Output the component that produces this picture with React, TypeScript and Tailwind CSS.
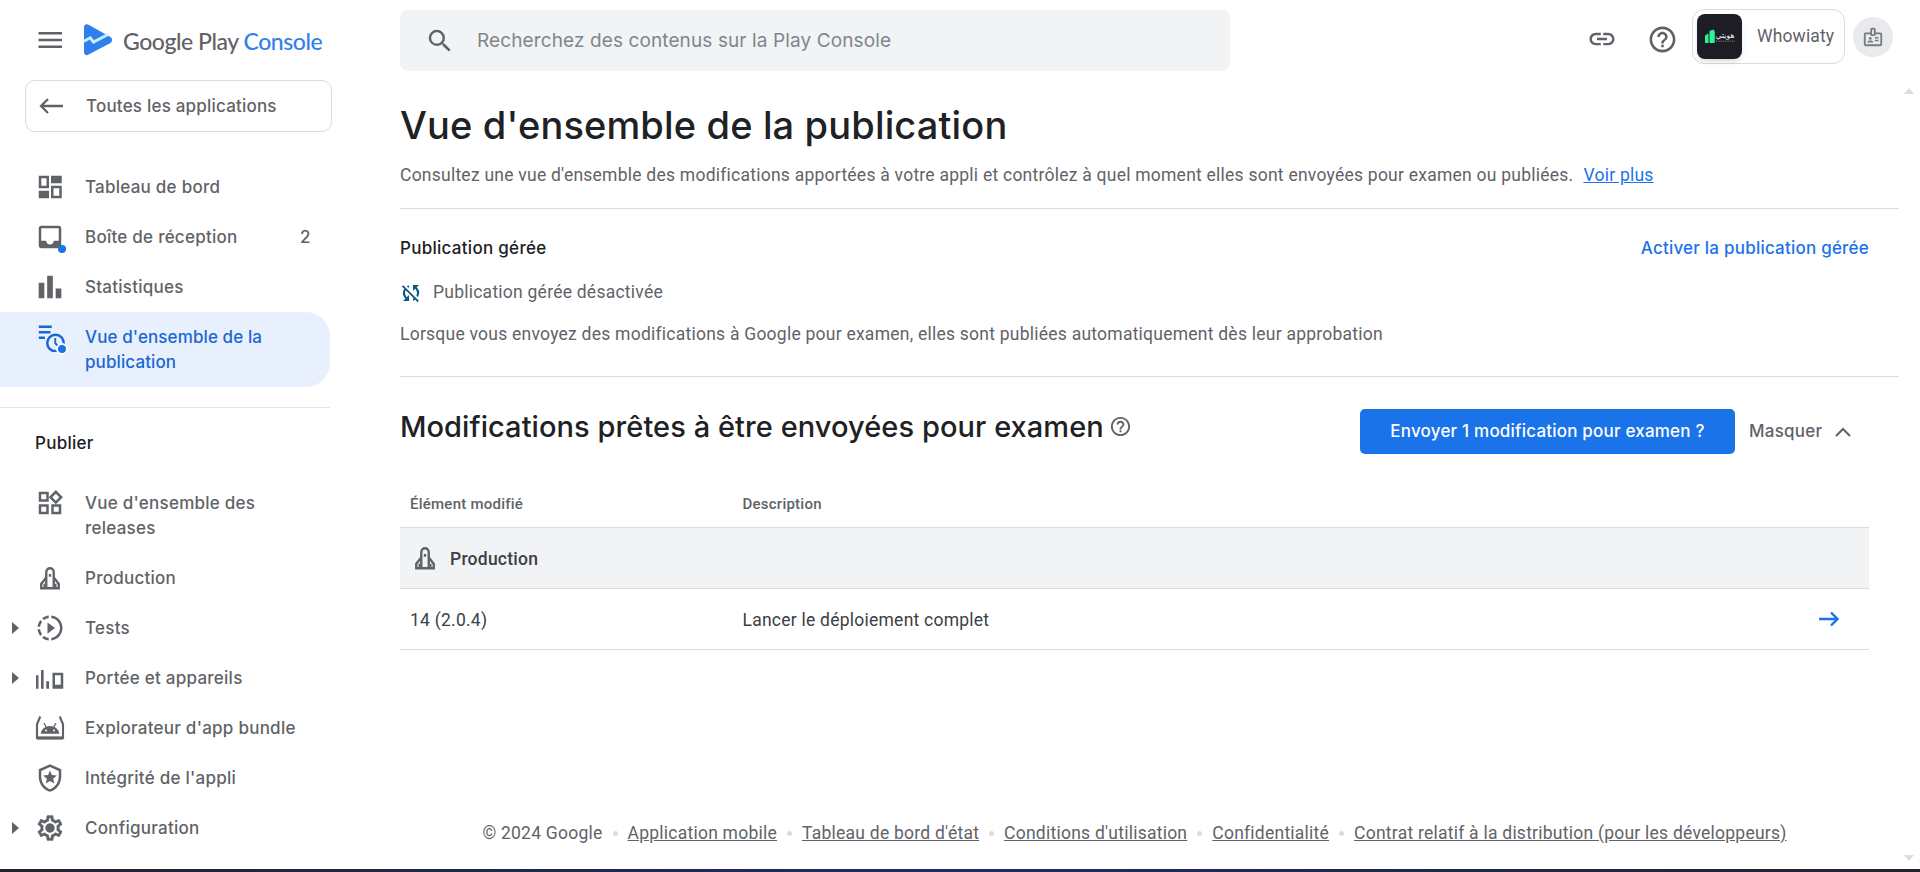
import type { ReactNode } from 'react';
import {
  MdBarChart,
  MdHelpOutline,
  MdInbox,
  MdLink,
  MdOutlineBadge,
  MdOutlineLocalPolice,
  MdOutlineWidgets,
  MdSearch,
  MdSlowMotionVideo,
  MdSyncDisabled,
} from 'react-icons/md';

const ICON = 'size-[30px]';

function DashboardIcon() {
  return (
    <svg viewBox="0 0 24 24" className={ICON} fill="currentColor">
      <path fillRule="evenodd" d="M3 3h8.200v10H3zM5 5v6h4.200V5zM12.800 11h8.600v10h-8.600zM14.800 13v6h4.600v-6z" />
      <path d="M12.800 3h8.600v6h-8.600zM3 15h8.200v6H3z" />
    </svg>
  );
}

function OverviewIcon() {
  return (
    <svg viewBox="0 0 24 24" className={ICON} fill="none" stroke="currentColor" strokeWidth="2">
      <path d="M3 3.800h10.400M3 8.200h9.400M3 12.600h5" />
      <circle cx="16.400" cy="16.800" r="6.600" />
      <path d="M16.200 12.800v4.200l2 2" strokeWidth="1.500" />
    </svg>
  );
}

function RocketIcon() {
  return (
    <svg viewBox="0 0 24 24" className={ICON} fill="none" stroke="currentColor" strokeWidth="1.900">
      <path d="M9 20.300V7.400C9 5.400 10.400 4.200 12 4.200s3 1.200 3 3.200v12.900" />
      <path d="M9 11.500l-4 5.300v3.400h14v-3.400l-4-5.300" />
      <path d="M12 8.800v2.200" />
      <path d="M7.400 16.500v3.500M16.600 16.500v3.500" strokeWidth="1.200" />
    </svg>
  );
}

function ReachIcon() {
  return (
    <svg viewBox="0 0 24 24" className={ICON} fill="currentColor">
      <path d="M.8 9.800h2V20.600h-2zM4.800 5.600h2.100v15H4.800zM9 14.600h2.200v6H9z" />
      <path fillRule="evenodd" d="M14 7.800h8.600v12.800H14zM16 9.800v7.600h4.600V9.800z" />
    </svg>
  );
}

function BundleIcon() {
  return (
    <svg viewBox="0 0 24 24" className={ICON} fill="none" stroke="currentColor" strokeWidth="1.700">
      <path d="M4.200 2.800L1.600 9v11h20.800V9l-2.600-6.200" />
      <path d="M1.600 20h20.800" strokeWidth="2.600" />
      <path d="M4.600 16.600c.3-3.600 3.400-6.300 7.400-6.300s7.100 2.700 7.400 6.300z" fill="currentColor" stroke="none" />
      <path d="M7.200 8l1.600 3M16.800 8l-1.600 3" strokeWidth="1" />
      <circle cx="8.800" cy="14" r=".8" fill="#fff" stroke="none" />
      <circle cx="15.200" cy="14" r=".8" fill="#fff" stroke="none" />
    </svg>
  );
}

function GearIcon() {
  return (
    <svg viewBox="0 0 24 24" className={ICON} fill="currentColor" stroke="currentColor" strokeWidth=".3">
      <path d="M19.430 12.980c.04-.32.07-.64.07-.98 0-.34-.03-.66-.07-.98l2.110-1.650c.19-.15.24-.42.12-.64l-2-3.460c-.09-.16-.26-.25-.44-.25-.06 0-.12.01-.17.03l-2.490 1c-.52-.4-1.080-.73-1.690-.98l-.38-2.650C14.460 2.180 14.250 2 14 2h-4c-.25 0-.46.18-.49.42l-.38 2.650c-.61.25-1.170.59-1.690.98l-2.490-1c-.06-.02-.12-.03-.18-.03-.17 0-.34.09-.43.25l-2 3.460c-.13.22-.07.49.12.64l2.110 1.650c-.04.32-.07.65-.07.98 0 .33.03.66.07.98l-2.110 1.650c-.19.15-.24.42-.12.64l2 3.460c.09.16.26.25.44.25.06 0 .12-.01.17-.03l2.490-1c.52.4 1.080.73 1.690.98l.38 2.650c.03.24.24.42.49.42h4c.25 0 .46-.18.49-.42l.38-2.650c.61-.25 1.170-.59 1.690-.98l2.490 1c.06.02.12.03.18.03.17 0 .34-.09.43-.25l2-3.460c.12-.22.07-.49-.12-.64l-2.110-1.650zm-1.980-1.710c.04.31.05.52.05.73 0 .21-.02.43-.05.73l-.14 1.130.89.7 1.080.84-.7 1.210-1.270-.51-1.040-.42-.9.680c-.43.32-.84.56-1.250.73l-1.060.43-.16 1.130-.2 1.350h-1.400l-.19-1.350-.16-1.130-1.060-.43c-.43-.18-.83-.41-1.230-.71l-.91-.7-1.060.43-1.270.51-.7-1.210 1.080-.84.89-.7-.14-1.130c-.03-.31-.05-.54-.05-.74s.02-.43.05-.73l.14-1.130-.89-.7-1.080-.84.7-1.210 1.270.51 1.040.42.9-.68c.43-.32.84-.56 1.250-.73l1.060-.43.16-1.130.2-1.350h1.390l.19 1.350.16 1.130 1.060.43c.43.18.83.41 1.230.71l.91.7 1.060-.43 1.270-.51.7 1.210-1.070.85-.89.7.14 1.130z" />
      <circle cx="12" cy="12" r="3.600" />
    </svg>
  );
}

function PlayLogo() {
  return (
    <svg viewBox="0 0 28 32" className="h-8 w-7">
      <path d="M0 3C0 .6 2.400-.6 4.600.7L26 12.800c2.700 1.500 2.700 4.900 0 6.400L4.600 30.600C2.400 31.900 0 30.700 0 28.300z" fill="#2f80ed" />
      <path d="M0 17.200l6.300-3.400 3.200 4.300L24 10.500" fill="none" stroke="#c4f1ff" strokeWidth="2.800" />
    </svg>
  );
}

type Item = { label: string; icon: ReactNode; count?: number; dot?: boolean; active?: boolean; expandable?: boolean };

const TOP: Item[] = [
  { label: 'Tableau de bord', icon: <DashboardIcon /> },
  { label: 'Boîte de réception', icon: <MdInbox className={ICON} />, count: 2, dot: true },
  { label: 'Statistiques', icon: <MdBarChart className="size-[34px] shrink-0" /> },
  { label: "Vue d'ensemble de la publication", icon: <OverviewIcon />, dot: true, active: true },
];

const PUBLISH: Item[] = [
  { label: "Vue d'ensemble des releases", icon: <MdOutlineWidgets className={ICON} /> },
  { label: 'Production', icon: <RocketIcon /> },
  { label: 'Tests', icon: <MdSlowMotionVideo className={ICON} />, expandable: true },
  { label: 'Portée et appareils', icon: <ReachIcon />, expandable: true },
  { label: "Explorateur d'app bundle", icon: <BundleIcon /> },
  { label: "Intégrité de l'appli", icon: <MdOutlineLocalPolice className={ICON} /> },
  { label: 'Configuration', icon: <GearIcon />, expandable: true },
];

function NavItem({ item }: { item: Item }) {
  return (
    <a
      className={
        item.active
          ? 'flex w-[330px] rounded-r-3xl bg-[#e8f0fe] py-[12.5px] tracking-[0.1px] text-[#1967d2]'
          : 'flex w-[330px] py-[12.5px] text-[#5f6368]'
      }
    >
      <span className="flex h-[25px] w-[35px] items-center pl-3">
        {item.expandable && (
          <svg viewBox="0 0 7 12" className="h-3 w-[7px]" fill="currentColor">
            <path d="M0 0l7 6-7 6z" />
          </svg>
        )}
      </span>
      <span className="relative flex h-[25px] w-[30px] items-center justify-center">
        {item.icon}
        {item.dot && (
          <span
            className={
              item.active
                ? 'absolute top-[18.5px] left-[21px] size-3 rounded-full border-2 border-white bg-[#1a73e8]'
                : 'absolute top-[20px] left-[23px] size-2 rounded-full bg-[#1a73e8]'
            }
          />
        )}
      </span>
      <span className="ml-5 w-[215px]">{item.label}</span>
      {item.count !== undefined && <span>{item.count}</span>}
    </a>
  );
}

const LINKS = [
  'Application mobile',
  "Tableau de bord d'état",
  "Conditions d'utilisation",
  'Confidentialité',
  'Contrat relatif à la distribution (pour les développeurs)',
];

function Sidebar() {
  return (
    <aside className="flex w-[400px] shrink-0 flex-col font-[Inter,sans-serif] text-[17px] leading-[25px] font-medium tracking-[0.25px]">
      <div className="flex h-20 items-center pl-[38px]">
        <svg viewBox="0 0 24 16" className="h-4 w-6 text-[#5f6368]" fill="currentColor">
          <path d="M.5 0h23.500v2.400H.5zM.5 6.800h23.500v2.400H.5zM.5 13.600h23.500V16H.5z" />
        </svg>
        <span className="ml-[22px]">
          <PlayLogo />
        </span>
        <span className="mt-px ml-[11px] font-[Lato,sans-serif] text-[23px] leading-8 font-medium tracking-[-0.45px] whitespace-nowrap text-[#5f6368]">
          Google Play <span className="text-[#2f80ed]">Console</span>
        </span>
      </div>
      <a className="ml-[25px] flex h-[52px] w-[307px] items-center rounded-[10px] border border-[#dadce0] pl-[13px] text-[#5f6368]">
        <svg viewBox="0 0 24 16" className="h-4 w-6" fill="none" stroke="currentColor" strokeWidth="2.300">
          <path d="M24 8H2M9 1L2 8l7 7" />
        </svg>
        <span className="ml-[23px] tracking-[0.2px]">Toutes les applications</span>
      </a>
      <nav className="mt-[30px] flex flex-col">
        {TOP.map((i) => (
          <NavItem key={i.label} item={i} />
        ))}
        <div className="mt-5 h-px w-[330px] bg-[#e4e5e7]" />
        <h2 className="flex h-[70px] items-center pl-[35px] text-[#202124]">Publier</h2>
        {PUBLISH.map((i) => (
          <NavItem key={i.label} item={i} />
        ))}
      </nav>
    </aside>
  );
}

function Header() {
  return (
    <header className="flex h-20 items-start pt-[9px]">
      <div className="mt-px flex h-[61px] w-[830px] items-center rounded-lg bg-[#f1f3f4] pl-[25px]">
        <MdSearch className="size-[30px] text-[#5f6368]" />
        <span className="mt-[2px] ml-[22px] font-[Inter,sans-serif] text-[19px] tracking-[0.11px] text-[#80868b]">
          Recherchez des contenus sur la Play Console
        </span>
      </div>
      <MdLink className="mt-[15px] ml-[357px] size-[30px] text-[#5f6368]" />
      <MdHelpOutline className="mt-[15px] ml-[30px] size-[31px] text-[#5f6368]" />
      <div className="ml-[14px] flex h-[55px] w-[153px] rounded-xl border border-[#dadce0] pt-1 pl-1">
        <svg viewBox="0 0 45 45" className="size-[45px] rounded-lg bg-[#1d1e25] shadow-md">
          <path d="M8 21.500l3.500-2v9.500H8.600L8 28.400zM12.500 17l4-1.500 1.300 2.500v10.200l-.8.800h-4.500z" fill="#2df596" />
          <text x="37.500" y="24" fontSize="7.500" textAnchor="end" direction="ltr" fill="#fff" fontFamily="DejaVu Sans, sans-serif" textLength="19">
            هويتي
          </text>
          <path d="M19 27.200h19" stroke="#85868c" strokeWidth=".9" strokeDasharray="1.300 1" />
        </svg>
        <span className="mt-[9px] ml-[15px] text-[17.5px] leading-[26px] tracking-[0.15px] text-[#5f6368]">
          Whowiaty
        </span>
      </div>
      <span className="mt-2 ml-2 flex size-10 items-center justify-center rounded-full bg-[#e8eaed]">
        <MdOutlineBadge className="size-[22px] text-[#777c81]" />
      </span>
    </header>
  );
}

function Main() {
  return (
    <main className="flex grow flex-col">
      <h1 className="mt-[22px] font-[Inter,sans-serif] text-[38px] leading-[46px] font-medium tracking-[0.15px] text-[#202124]">
        Vue d'ensemble de la publication
      </h1>
      <p className="mt-[15px] leading-[25px]">
        Consultez une vue d'ensemble des modifications apportées à votre appli et contrôlez à quel moment elles sont
        envoyées pour examen ou publiées.
        <a className="ml-[10px] text-[#1a73e8] underline">Voir plus</a>
      </p>
      <section className="mt-5 flex h-[169px] w-[1499px] flex-col border-y border-[#dadce0] pt-[27px] pr-[30px]">
        <div className="flex items-center justify-between font-[Inter,sans-serif] text-[17px] leading-[25px] font-medium tracking-[0.28px]">
          <h3 className="text-[#202124]">Publication gérée</h3>
          <a className="tracking-[0.22px] text-[#1a73e8]">Activer la publication gérée</a>
        </div>
        <div className="mt-[19px] flex items-center leading-[25px]">
          <MdSyncDisabled className="-ml-px size-[24px] text-[#0b5788]" />
          <span className="ml-[10px]">Publication gérée désactivée</span>
        </div>
        <p className="mt-[17px] leading-[25px]">
          Lorsque vous envoyez des modifications à Google pour examen, elles sont publiées automatiquement dès leur
          approbation
        </p>
      </section>
      <section className="w-[1469px]">
        <div className="flex h-[110px] items-start pt-8 font-[Inter,sans-serif]">
          <h2 className="-mt-px text-[29px] leading-[38px] font-medium tracking-[0.07px] text-[#202124]">
            Modifications prêtes à être envoyées pour examen
          </h2>
          <MdHelpOutline className="mt-[6px] ml-[5px] size-[23px] text-[#5f6368]" />
          <button className="ml-auto h-[45px] w-[375px] rounded-[5px] bg-[#1a73e8] text-[17px] font-medium tracking-[0.2px] whitespace-nowrap text-white">
            Envoyer 1 modification pour examen ?
          </button>
          <button className="ml-[14px] flex h-[45px] w-[120px] items-center text-[17px] font-medium text-[#5f6368]">
            Masquer
            <svg viewBox="0 0 16 10" className="ml-[13px] h-[10px] w-4" fill="none" stroke="currentColor" strokeWidth="2">
              <path d="M1 9l7-7 7 7" />
            </svg>
          </button>
        </div>
        <div className="grid grid-cols-[332.5px_1fr] border-b border-[#dadce0] pt-[5px] pb-[11px] pl-[10px] text-[15px] leading-[24px] font-medium">
          <span>Élément modifié</span>
          <span>Description</span>
        </div>
        <div className="flex h-[61px] items-center border-b border-[#dadce0] bg-[#f1f3f4] pl-[10px] font-medium text-[#3c4043]">
          <span className="text-[#5f6368]">
            <RocketIcon />
          </span>
          <span className="mt-[2px] ml-[10px]">Production</span>
        </div>
        <div className="grid h-[61px] grid-cols-[332.5px_1fr_50px] items-center border-b border-[#dadce0] pl-[10px] text-[#3c4043]">
          <span className="mt-[2px]">14 (2.0.4)</span>
          <span className="mt-[2px]">Lancer le déploiement complet</span>
          <svg viewBox="0 0 20 16" className="h-4 w-5 text-[#1a73e8]" fill="none" stroke="currentColor" strokeWidth="2.400">
            <path d="M0 8h18.500M12 1.500L18.500 8 12 14.500" />
          </svg>
        </div>
      </section>
      <footer className="mt-auto mb-[23px] flex w-[1469px] items-center justify-center gap-[10px] leading-[25px]">
        <span>© 2024 Google</span>
        {LINKS.map((l) => (
          <span key={l} className="flex items-center gap-[10px]">
            <span className="size-[5px] rounded-full bg-[#dadce0]" />
            <a className="underline">{l}</a>
          </span>
        ))}
      </footer>
    </main>
  );
}

export default function App() {
  return (
    <div className="relative flex h-[872px] w-[1920px] flex-col overflow-hidden bg-white font-[Roboto,sans-serif] text-[17.5px] tracking-[0.24px] text-[#5f6368]">
      <div className="flex h-[869px]">
        <Sidebar />
        <div className="flex grow flex-col">
          <Header />
          <Main />
        </div>
      </div>
      <div className="h-[3px] bg-linear-to-r from-[#20242e] via-[#1c2b66] to-[#20242e]" />
      <svg viewBox="0 0 10 6" className="absolute top-[88px] right-[6px] h-[6px] w-[10px]" fill="#dadce0">
        <path d="M0 6l5-6 5 6z" />
      </svg>
      <svg viewBox="0 0 10 6" className="absolute top-[855px] right-[6px] h-[6px] w-[10px]" fill="#dadce0">
        <path d="M0 0l5 6 5-6z" />
      </svg>
    </div>
  );
}
